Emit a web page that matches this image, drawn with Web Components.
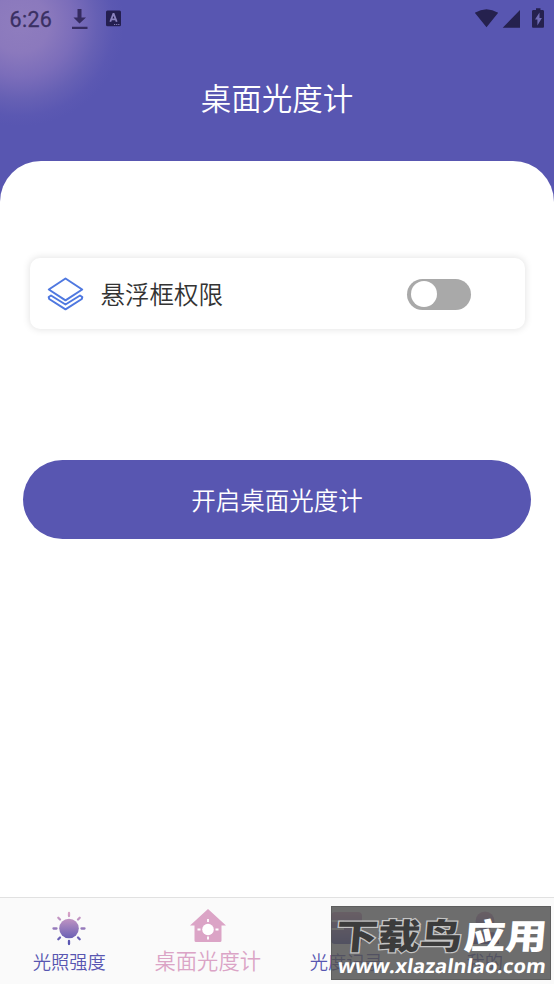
<!DOCTYPE html>
<html lang="zh-CN">
<head>
<meta charset="utf-8">
<title>桌面光度计</title>
<style>
html,body{margin:0;height:100%;overflow:hidden;background:#5856b1}
body{font-family:"Noto Sans CJK SC DemiLight","Noto Sans CJK SC",sans-serif;font-weight:350}
</style>
</head>
<body>
<light-app></light-app>
<script>
const define = (name, html) => customElements.define(name, class extends HTMLElement {
  constructor() {
    super();
    const t = document.createElement('template');
    t.innerHTML = html;
    this.attachShadow({ mode: 'open' }).append(t.content.cloneNode(true));
  }
});

define('status-bar', `
<style>
:host{display:flex;align-items:flex-start;height:38px;font:400 21.5px/39px Roboto,sans-serif;color:#3a3063}
span{width:60.500px;padding-left:9.500px;letter-spacing:.3px;-webkit-text-stroke:.3px #3a3063}
svg{display:block}
.sp{flex:1}
</style>
<span>6:26</span>
<svg width="70" height="38" viewBox="70 0 70 38"><path fill="#352b60" d="M77.500 9h4v8.500h4.500L79.500 23.500 73.500 17.500h4zM72 26.800h15.500v2.200H72z"/><rect x="106" y="10.500" width="15" height="15.800" rx="1.500" fill="#241f50"/><path d="M110.300 21.800L113.300 14h.4l3 7.800M111.300 19.300h4.600" fill="none" stroke="#8b83be" stroke-width="1.800"/><path d="M114 24.500h5.500" stroke="#827ab5" stroke-width="1.200" stroke-dasharray="1.200 .9"/></svg>
<div class="sp"></div>
<svg width="94" height="38" viewBox="460 0 94 38"><path fill="#25214e" d="M474.800 12.800Q486.500 5.500 498.200 12.800L486.500 27.200zM520 10v17.800h-17.300zM533.500 10h2.500V8.300h4.500V10h2c1 0 1.500.6 1.500 1.500v14.800c0 1-.5 1.500-1.500 1.500h-9c-1 0-1.500-.5-1.500-1.500V11.500c0-.9.500-1.500 1.500-1.500z"/><path fill="#706cb4" d="M539.500 12.500l-4.500 7h2.400v6l4.500-7.500h-2.400z"/></svg>`);

define('app-header', `
<style>
:host{display:flex;flex-direction:column;height:161px;color:#fff;background:radial-gradient(ellipse 104px 102px at 20px 24px,#8f7dbe 0,#8b79bd 28%,#7b6dba 52%,#6660b4 74%,#5b58b2 90%,#5856b1 100%)}
h1{margin:37px 0 0;text-align:center;font-size:30.500px;line-height:44px;font-weight:inherit}
</style>
<status-bar></status-bar><h1><slot></slot></h1>`);

define('toggle-switch', `
<style>
:host{display:flex;align-items:center;box-sizing:border-box;width:63.500px;height:31px;padding-left:3.500px;border-radius:16px;background:#a9a9a9}
i{width:26px;height:26px;border-radius:50%;background:#fff}
</style><i></i>`);

define('permission-card', `
<style>
:host{display:flex;align-items:center;box-sizing:border-box;height:71px;padding:1px 54px 0 16px;border-radius:10px;background:#fff;box-shadow:0 0 7px 1px rgba(0,0,0,.1);color:#333;font-size:24.500px;line-height:36px}
svg{display:block;margin-right:16.500px}
span{flex:1}
</style>
<svg width="38" height="36" viewBox="46 276 38 36" fill="none" stroke="#4f78e0" stroke-width="2" stroke-linejoin="round"><path d="M65.500 278.500L82.200 289.500 65.500 300.300 48.800 289.500z"/><path d="M51 295.500L65.500 304.500 80 295.500 82.300 297 81.800 299 65.500 309.300 49.200 299 48.700 297z"/></svg>
<span><slot></slot></span><toggle-switch></toggle-switch>`);

define('pill-button', `
<style>
:host{display:block}
button{display:block;width:100%;height:79px;padding:0;border:0;border-radius:40px;background:#5856b1;color:#fff;font:inherit;font-size:24.500px;line-height:36px}
</style><button><slot></slot></button>`);

define('nav-tab', `
<style>
:host{display:flex;flex-direction:column;align-items:center;flex:1;min-width:0;padding-top:10px;color:#5856b1;font-size:18.300px;white-space:nowrap}
:host([active]){color:#dba4c6;font-size:21.300px}
div{height:38px}
span{line-height:28px;margin-top:1px}
:host([active]) span{margin-top:0}
</style><div><slot name="icon"></slot></div><span><slot></slot></span>`);

define('tab-bar', `
<style>
:host{display:flex;box-sizing:border-box;height:87px;border-top:1px solid #e1e1e1;background:#fafafa}
svg{display:block}
</style>
<nav-tab><svg slot="icon" width="38" height="38" viewBox="0 0 38 38"><defs><linearGradient id="g" gradientUnits="userSpaceOnUse" x1="0" y1="4" x2="0" y2="35"><stop stop-color="#dda5c7"/><stop offset="1" stop-color="#5654b1"/></linearGradient></defs><circle cx="19" cy="20.500" r="9.800" fill="url(#g)"/><path d="M19.010 5L19 8M19 33l.01 3M3.500 20.490L6.500 20.500M31.500 20.500l3 .01M8.300 9.800l1.700 1.700M29.700 9.800L28 11.500M8.300 31.200l1.700-1.700M29.700 31.200L28 29.500" fill="none" stroke="url(#g)" stroke-width="2.300" stroke-linecap="round"/></svg>光照强度</nav-tab>
<nav-tab active><svg slot="icon" width="38" height="38" viewBox="0 0 38 38"><path fill="#dba4c6" d="M19 1L37 17.500H32.500V32.500q0 1.500-1.500 1.500H7Q5.500 34 5.500 32.500V17.500H1z"/><circle cx="19" cy="21.500" r="5.800" fill="#fff"/><path d="M19 11v3M19 28.500v3M8.500 21.500h3M26.500 21.500h3" stroke="#fff" stroke-width="1.800"/></svg>桌面光度计</nav-tab>
<nav-tab><svg slot="icon" width="38" height="38" viewBox="0 0 38 38"><defs><linearGradient id="r" x2="0" y2="1"><stop stop-color="#dda5c7"/><stop offset="1" stop-color="#5654b1"/></linearGradient></defs><rect x="4" y="4" width="31" height="32" rx="4" fill="url(#r)"/><path d="M4 13h12v8H4" fill="none" stroke="#fafafa" stroke-width="2"/></svg>光度记录</nav-tab>
<nav-tab><svg slot="icon" width="38" height="38" viewBox="0 0 38 38"><defs><linearGradient id="u" gradientUnits="userSpaceOnUse" x1="0" y1="3" x2="0" y2="36"><stop stop-color="#dda5c7"/><stop offset="1" stop-color="#5654b1"/></linearGradient></defs><circle cx="19" cy="13" r="9.500" fill="url(#u)"/><path d="M5 36V33q0-9 9-9h10q9 0 9 9v3z" fill="url(#u)"/></svg>我的</nav-tab>`);

define('site-watermark', `
<style>
:host{display:block;position:absolute;left:331px;top:906px;width:220px;height:74px}
svg{display:block}
.zh{font:900 35px "Noto Sans CJK SC",sans-serif}
.url{font:700 19.500px "Open Sans","Noto Sans",sans-serif}
</style>
<svg width="220" height="74" viewBox="0 0 220 74"><rect width="220" height="74" fill="#505050" fill-opacity=".83"/><rect x=".5" y=".5" width="219" height="73" fill="none" stroke="#555" stroke-opacity=".6"/>
<g class="zh" transform="translate(0 43) skewX(-5)"><text x="4" textLength="126" lengthAdjust="spacingAndGlyphs" fill="#3c3c3c" stroke="#c4c4c4" stroke-width="2.400" paint-order="stroke">下载鸟</text><text x="132" textLength="83" lengthAdjust="spacingAndGlyphs" fill="#fff">应用</text></g>
<text class="url" transform="translate(6 67) skewX(-8)" textLength="208" lengthAdjust="spacingAndGlyphs" fill="#fff">www.xlazalnlao.com</text></svg>`);

define('light-app', `
<style>
:host{display:flex;flex-direction:column;height:984px;width:554px;position:relative;background:#5856b1}
main{flex:1;display:flex;flex-direction:column;background:#fff;border-radius:41px 41px 0 0}
permission-card{margin:97px 29.500px 0 30px}
pill-button{margin:131px 23px 0}
</style>
<app-header>桌面光度计</app-header>
<main><permission-card>悬浮框权限</permission-card><pill-button>开启桌面光度计</pill-button></main>
<tab-bar></tab-bar>
<site-watermark></site-watermark>`);
</script>
</body>
</html>
